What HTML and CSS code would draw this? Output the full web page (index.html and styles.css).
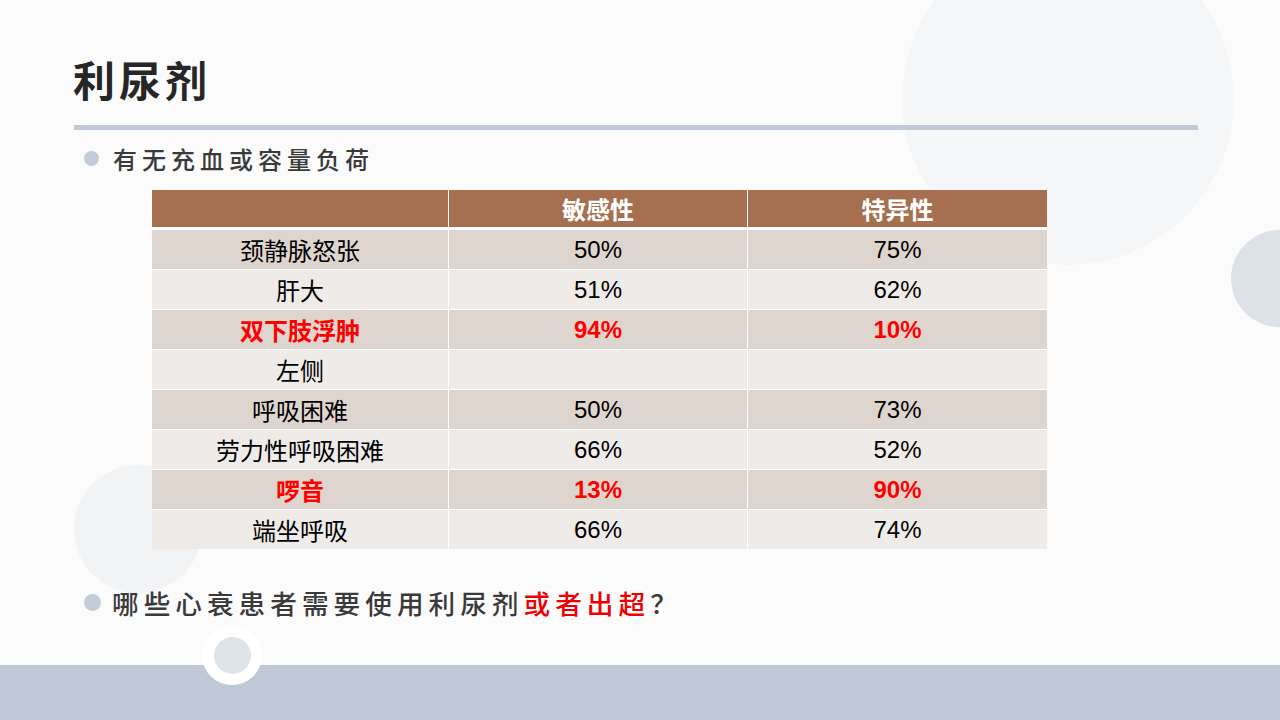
FILE: index.html
```html
<!DOCTYPE html>
<html lang="zh-CN">
<head>
<meta charset="utf-8">
<title>利尿剂</title>
<link rel="stylesheet" href="styles.css">
</head>
<body>
<div class="slide">
  <div class="deco deco-big"></div>
  <div class="deco deco-right"></div>
  <div class="deco deco-left"></div>
  <div class="band"></div>
  <div class="deco ring"><span class="ring-inner"></span></div>

  <div class="content">
    <h1 class="title">利尿剂</h1>
    <div class="rule"></div>
    <div class="bullet bullet-top"><span class="dot"></span><span class="btext">有无充血或容量负荷</span></div>

    <div class="table">
      <div class="cell head"></div>
      <div class="cell head">敏感性</div>
      <div class="cell head">特异性</div>

      <div class="cell dark">颈静脉怒张</div>
      <div class="cell dark">50%</div>
      <div class="cell dark">75%</div>

      <div class="cell light">肝大</div>
      <div class="cell light">51%</div>
      <div class="cell light">62%</div>

      <div class="cell dark hl">双下肢浮肿</div>
      <div class="cell dark hl">94%</div>
      <div class="cell dark hl">10%</div>

      <div class="cell light">左侧</div>
      <div class="cell light"></div>
      <div class="cell light"></div>

      <div class="cell dark">呼吸困难</div>
      <div class="cell dark">50%</div>
      <div class="cell dark">73%</div>

      <div class="cell light">劳力性呼吸困难</div>
      <div class="cell light">66%</div>
      <div class="cell light">52%</div>

      <div class="cell dark hl">啰音</div>
      <div class="cell dark hl">13%</div>
      <div class="cell dark hl">90%</div>

      <div class="cell light">端坐呼吸</div>
      <div class="cell light">66%</div>
      <div class="cell light">74%</div>
    </div>

    <div class="bullet bullet-bottom"><span class="dot dot-lg"></span><span class="btext">哪些心衰患者需要使用利尿剂<span class="red">或者出超</span>？</span></div>
  </div>
</div>
</body>
</html>
```

FILE: styles.css
```css
* { box-sizing: border-box; }
html, body { margin: 0; padding: 0; }
body { background: #fbfbfb; }

.slide {
  position: relative;
  width: 1280px;
  height: 720px;
  overflow: hidden;
  background: #fbfbfb;
  font-family: "Noto Sans CJK SC", "Liberation Sans", sans-serif;
}

.deco { position: absolute; border-radius: 50%; }
.deco-big { left: 902px; top: -67px; width: 332px; height: 332px; background: #f5f6f8; }
.deco-right { left: 1231px; top: 230px; width: 97px; height: 97px; background: #dde2e9; }
.deco-left { left: 74px; top: 465px; width: 128px; height: 128px; background: #f2f3f5; }
.band { position: absolute; left: 0; right: 0; top: 665px; height: 55px; background: #bfc9d5; }
.ring {
  left: 202px; top: 625px; width: 60px; height: 60px; background: #ffffff;
  display: flex; align-items: center; justify-content: center;
}
.ring-inner { width: 37px; height: 37px; border-radius: 50%; background: #dfe3ea; }

.content { position: relative; padding-top: 57px; }

.title {
  margin: 0 0 0 73px;
  font-size: 42px;
  line-height: 44px;
  font-weight: 700;
  letter-spacing: 4px;
  color: #262626;
}

.rule { margin: 24px 0 0 74px; width: 1124px; height: 5px; background: #c1cad7; }

.bullet { display: flex; align-items: center; padding-left: 84px; color: #3a3a3a; font-weight: 500; }
.bullet-top { margin-top: 13px; height: 30px; font-size: 24px; letter-spacing: 5px; }
.bullet-top .dot { width: 15px; height: 15px; margin-right: 14px; }
.dot { flex: none; border-radius: 50%; background: #c3ccd8; }
.dot-lg { width: 17px; height: 17px; margin-right: 11px; }
.btext { white-space: nowrap; }
.bullet-bottom { margin-top: 38px; height: 30px; font-size: 26.67px; letter-spacing: 5px; }
.bullet-top .btext, .bullet-bottom .btext { position: relative; top: 0; }
.red { color: #ee0000; }

.table {
  margin: 17px 0 0 152px;
  width: 895px;
  display: grid;
  grid-template-columns: 296px 298px 299px;
  column-gap: 1px;
  row-gap: 1px;
  background: #ffffff;
  font-family: "Liberation Sans", "Noto Sans CJK SC", sans-serif;
  font-size: 24px;
  color: #000;
}
.cell { height: 39px; display: flex; align-items: center; justify-content: center; }
.head { height: 37px; margin-bottom: 2px; background: #a67050; color: #fff; font-weight: 700; }
.dark { background: #dfd5cf; }
.light { background: #efebe8; }
.hl { color: #ff0000; font-weight: 700; }
```
